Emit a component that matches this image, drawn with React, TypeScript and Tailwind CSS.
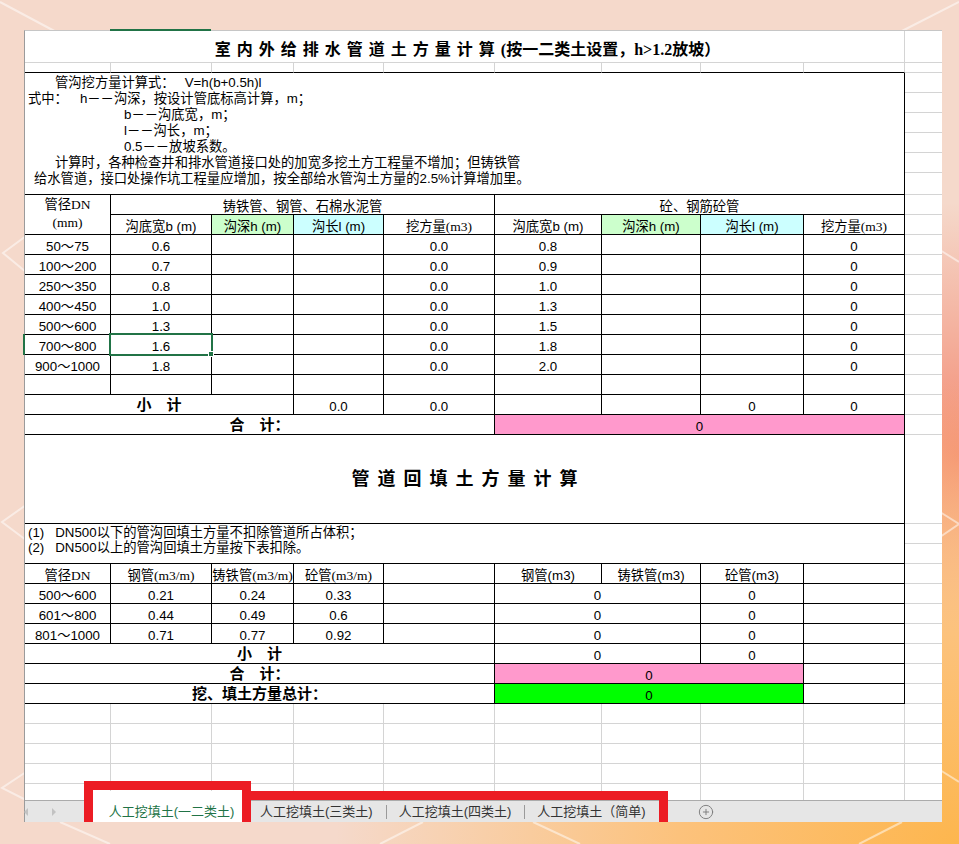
import React from 'react';
import { CirclePlus } from 'lucide-react';

type CellProps = {
  s?: string;
  b?: 'k' | 'g' | 'kb' | 'j' | 'r' | 'n';
  al?: string;
  x?: string;
  children?: React.ReactNode;
};

function C({ s = '', b = 'k', al = 'flex items-end justify-center leading-[14px]', x = '', children }: CellProps) {
  const bc =
    b === 'k'
      ? 'border-r border-b border-black'
      : b === 'g'
      ? 'border-r border-b border-[#d4d4d4]'
      : b === 'kb'
      ? 'border-r border-b border-r-[#d4d4d4] border-b-black'
      : b === 'j'
      ? 'border-b border-[#d4d4d4]'
      : b === 'r'
      ? 'border-r border-[#d4d4d4]'
      : '';
  return <div className={`${s} ${bc} ${al} whitespace-nowrap ${x}`}>{children}</div>;
}

function S({ children }: { children: React.ReactNode }) {
  return <span className="font-['Liberation_Serif','Noto_Sans_CJK_SC',serif] text-[13.5px]">{children}</span>;
}

const rows1 = [
  ['50～75', '0.6', '0.0', '0.8', '0'],
  ['100～200', '0.7', '0.0', '0.9', '0'],
  ['250～350', '0.8', '0.0', '1.0', '0'],
  ['400～450', '1.0', '0.0', '1.3', '0'],
  ['500～600', '1.3', '0.0', '1.5', '0'],
  ['700～800', '1.6', '0.0', '1.8', '0'],
  ['900～1000', '1.8', '0.0', '2.0', '0'],
];

const rows2 = [
  ['500～600', '0.21', '0.24', '0.33'],
  ['601～800', '0.44', '0.49', '0.6'],
  ['801～1000', '0.71', '0.77', '0.92'],
];

const bold = 'flex items-end justify-center pb-[1px] leading-[17px] text-[15px] font-bold';

export default function App() {
  return (
    <div className="relative h-[844px] w-[959px] overflow-hidden bg-[#f5d9cb] bg-[image:radial-gradient(ellipse_65%_55%_at_100%_100%,#fdb64e_0%,#fcc27c_45%,rgba(250,205,170,0)_100%),radial-gradient(ellipse_22%_30%_at_100%_54%,#f38a72_0%,rgba(243,138,114,0)_100%)] pl-[24px] pt-[30px] font-['Liberation_Sans','Noto_Sans_CJK_SC',sans-serif]">
      <svg className="absolute inset-0" width="959" height="844" viewBox="0 0 959 844" fill="none">
        <g stroke="#ffffff" strokeOpacity="0.5" strokeWidth="2">
          <line x1="0" y1="2" x2="60" y2="34" />
          <line x1="900" y1="32" x2="959" y2="2" />
          <polyline points="26,236 3,253 26,272" />
          <polyline points="26,505 2,522 26,540" />
          <polyline points="940,250 959,262" />
          <polyline points="940,512 959,524 940,537" />
          <polyline points="26,772 2,788 26,800" />
          <line x1="60" y1="822" x2="110" y2="844" />
          <line x1="423" y1="822" x2="380" y2="844" />
          <line x1="533" y1="822" x2="580" y2="844" />
          <line x1="902" y1="822" x2="859" y2="844" />
          <polyline points="940,770 959,782" />
        </g>
      </svg>

      <div className="relative h-[792px] w-[918px] border-l border-t border-l-[#9b9b9b] border-t-[#c6c6c6] bg-white">
        <div className="grid grid-cols-[86px_101px_82px_90px_111px_107px_99px_103px_101px_37px] grid-rows-[32px_10px_repeat(5,20px)_22px_repeat(12,20px)_89px_repeat(13,20px)_16px] text-[13.3px] text-black">
          {/* Row 1 title */}
          <C s="col-span-9" b="g" al="flex items-end justify-center pb-[2px] pl-[6px] leading-[20px]" x="relative text-[16px] font-bold">
            <span className="absolute left-[85px] top-[-2px] h-[2px] w-[101px] bg-[#217346]" />
            <span className="tracking-[6px]">室内外给排水管道土方量计算</span>
            <span>
              <span className="font-['Liberation_Serif',serif]">(</span>按一二类土设置，
              <span className="font-['Liberation_Serif',serif]">h&gt;1.2</span>放坡）
            </span>
          </C>
          <C b="j" />
          {/* Row 2 */}
          <C b="kb" />
          <C b="kb" />
          <C b="kb" />
          <C b="kb" />
          <C b="kb" />
          <C b="kb" />
          <C b="kb" />
          <C b="kb" />
          <C b="kb" />
          <C b="j" />
          {/* Notes */}
          <C s="col-span-9 row-span-6" al="flex flex-col pt-[2px] leading-[16px]">
            <div className="pl-[30px]">
              管沟挖方量计算式：<span className="ml-[10px]">V=h(b+0.5h)l</span>
            </div>
            <div className="pl-[3px]">
              式中：<span className="ml-[12px]">h－－沟深，按设计管底标高计算，m；</span>
            </div>
            <div className="pl-[99px]">b－－沟底宽，m；</div>
            <div className="pl-[99px]">l－－沟长，m；</div>
            <div className="pl-[99px]">0.5－－放坡系数。</div>
            <div className="pl-[30px]">计算时，各种检查井和排水管道接口处的加宽多挖土方工程量不增加；但铸铁管</div>
            <div className="pl-[9px]">给水管道，接口处操作坑工程量应增加，按全部给水管沟土方量的2.5%计算增加里。</div>
          </C>
          <C b="j" />
          <C b="j" />
          <C b="j" />
          <C b="j" />
          <C b="j" />
          <C b="j" />
          {/* Table 1 header */}
          <C s="row-span-2" al="flex flex-col items-center justify-start pt-[1px] leading-[18px]">
            <span>
              管径<S>DN</S>
            </span>
            <S>(mm)</S>
          </C>
          <C s="col-span-4">铸铁管、钢管、石棉水泥管</C>
          <C s="col-span-4">砼、钢筋砼管</C>
          <C b="j" />
          <C>沟底宽b (m)</C>
          <C x="bg-[#ccffcc]">沟深h (m)</C>
          <C x="bg-[#ccffff]">沟长l (m)</C>
          <C>
            挖方量<S>(m3)</S>
          </C>
          <C>沟底宽b (m)</C>
          <C x="bg-[#ccffcc]">沟深h (m)</C>
          <C x="bg-[#ccffff]">沟长l (m)</C>
          <C>
            挖方量<S>(m3)</S>
          </C>
          <C b="j" />
          {rows1.map((r, i) => (
            <React.Fragment key={i}>
              <C x={i === 5 ? 'relative' : ''}>
                {r[0]}
                {i === 5 && <span className="absolute left-[-2px] top-[-1px] h-[21px] w-[2px] bg-[#217346]" />}
              </C>
              {i === 5 ? (
                <C x="relative z-10">
                  {r[1]}
                  <span className="absolute left-[-2px] top-[-2px] h-[23px] w-[104px] border-2 border-[#217346]" />
                  <span className="absolute bottom-[-3px] right-[-3px] h-[6px] w-[6px] border border-white bg-[#217346]" />
                </C>
              ) : (
                <C>{r[1]}</C>
              )}
              <C />
              <C />
              <C>{r[2]}</C>
              <C>{r[3]}</C>
              <C />
              <C />
              <C>{r[4]}</C>
              <C b="j" />
            </React.Fragment>
          ))}
          {/* empty row */}
          <C />
          <C />
          <C />
          <C />
          <C />
          <C />
          <C />
          <C />
          <C />
          <C b="j" />
          {/* subtotal */}
          <C s="col-span-3" al={bold}>小　计</C>
          <C>0.0</C>
          <C>0.0</C>
          <C />
          <C />
          <C>0</C>
          <C>0</C>
          <C b="j" />
          {/* total */}
          <C s="col-span-5" al={bold}>合　计：</C>
          <C s="col-span-4" x="bg-[#ff99cc]">0</C>
          <C b="j" />
          {/* section title */}
          <C s="col-span-9" al="flex items-center justify-center pl-[8px] text-[18px] font-bold tracking-[8px]">
            管道回填土方量计算
          </C>
          <C b="j" />
          {/* notes 2 */}
          <C s="col-span-9 row-span-2" al="flex flex-col pt-[1px] leading-[15px]">
            <div className="pl-[3px]">
              (1)<span className="ml-[11px]">DN500以下的管沟回填土方量不扣除管道所占体积；</span>
            </div>
            <div className="pl-[3px]">
              (2)<span className="ml-[11px]">DN500以上的管沟回填土方量按下表扣除。</span>
            </div>
          </C>
          <C b="j" />
          <C b="j" />
          {/* Table 2 header */}
          <C>
            管径<S>DN</S>
          </C>
          <C>
            钢管<S>(m3/m)</S>
          </C>
          <C>
            铸铁管<S>(m3/m)</S>
          </C>
          <C>
            砼管<S>(m3/m)</S>
          </C>
          <C />
          <C>钢管(m3)</C>
          <C>铸铁管(m3)</C>
          <C>砼管(m3)</C>
          <C />
          <C b="j" />
          {rows2.map((r, i) => (
            <React.Fragment key={i}>
              <C>{r[0]}</C>
              <C>{r[1]}</C>
              <C>{r[2]}</C>
              <C>{r[3]}</C>
              <C />
              <C s="col-span-2">0</C>
              <C>0</C>
              <C />
              <C b="j" />
            </React.Fragment>
          ))}
          <C s="col-span-5" al={bold}>小　计</C>
          <C s="col-span-2">0</C>
          <C>0</C>
          <C />
          <C b="j" />
          <C s="col-span-5" al={bold}>合　计：</C>
          <C s="col-span-3" x="bg-[#ff99cc]">0</C>
          <C />
          <C b="j" />
          <C s="col-span-5" al={bold}>挖、填土方量总计：</C>
          <C s="col-span-3" x="bg-[#00ff00]">0</C>
          <C />
          <C b="j" />
          {/* empty grid rows */}
          {[0, 1, 2, 3].map((k) => (
            <React.Fragment key={k}>
              <C b="g" />
              <C b="g" />
              <C b="g" />
              <C b="g" />
              <C b="g" />
              <C b="g" />
              <C b="g" />
              <C b="g" />
              <C b="g" />
              <C b="j" />
            </React.Fragment>
          ))}
          <C b="r" />
          <C b="r" />
          <C b="r" />
          <C b="r" />
          <C b="r" />
          <C b="r" />
          <C b="r" />
          <C b="r" />
          <C b="r" />
          <C b="n" />
        </div>

        {/* Sheet tab bar */}
        <div className="flex h-[22px] border-t border-[#ababab] bg-[#e6e6e6] text-[13px] text-[#333333]">
          <div className="flex w-[68px] items-center">
            <svg width="5" height="8" viewBox="0 0 5 8" className="ml-[-1px]">
              <polygon points="4,0 0,4 4,8" fill="#c2c2c2" />
            </svg>
            <svg width="5" height="8" viewBox="0 0 5 8" className="ml-[23px]">
              <polygon points="0,0 4,4 0,8" fill="#c2c2c2" />
            </svg>
          </div>
          <div className="relative z-10 -mt-[10px] flex h-[31px] w-[149px] items-end justify-center bg-white pb-[1px] pl-[8px] leading-[18px] text-[#217346]">
            人工挖填土(一二类土)
          </div>
          <div className="flex w-[417px] items-center pt-[1px]">
            <span className="ml-[18px]">人工挖填土(三类土)</span>
            <span className="ml-[13px] h-[14px] w-px bg-[#9a9a9a]" />
            <span className="ml-[12px]">人工挖填土(四类土)</span>
            <span className="ml-[13px] h-[14px] w-px bg-[#9a9a9a]" />
            <span className="ml-[12px]">人工挖填土（简单)</span>
          </div>
          <div className="ml-[39px] flex items-center pt-[1px]">
            <CirclePlus size={16} strokeWidth={1.4} color="#7b7b7b" />
          </div>
        </div>

        {/* red annotation frame */}
        <div className="pointer-events-none absolute left-[59px] top-[750px] z-20 h-[41px] w-[167px] border-[9px] border-b-0 border-[#ec1c24]" />
        <div className="pointer-events-none absolute left-[226px] top-[760px] z-20 h-[31px] w-[417px] border-r-[9px] border-t-[9px] border-[#ec1c24]" />
      </div>
    </div>
  );
}
